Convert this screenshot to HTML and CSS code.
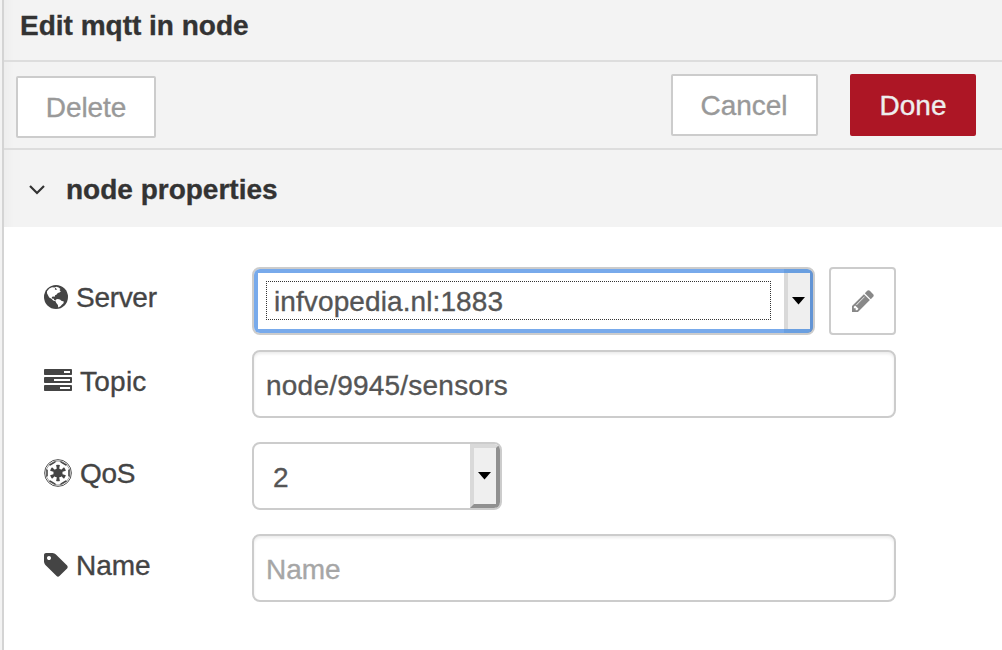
FILE: index.html
```html
<!DOCTYPE html>
<html lang="en">
<head>
<meta charset="utf-8">
<title>Edit mqtt in node</title>
<link rel="stylesheet" href="styles.css">
</head>
<body>
<main class="tray">
  <header class="tray-header"><span>Edit mqtt in node</span></header>
  <div class="toolbar">
    <button class="btn btn-delete">Delete</button>
    <button class="btn btn-cancel">Cancel</button>
    <button class="btn btn-done">Done</button>
  </div>
  <div class="section">
    <svg class="chevron" viewBox="0 0 18 12"><path d="M2 2l7 7 7-7" fill="none" stroke="#333" stroke-width="2.2"/></svg>
    <span class="section-title">node properties</span>
  </div>
  <form class="form">
    <div class="row row-server">
      <label class="label">
        <svg class="icon i24" viewBox="0 0 24 24"><circle cx="12" cy="12" r="12" fill="#444"/><path fill="#fff" d="M3 6.300L5.300 3.600 8 2.200l2.600.3 1.800-.8 2.300.7 1.800 1.600-1 .9 1.300 1.500-1.300 1.100-1.700.4-1.100 1.500-1.600.9-.4 1.500-1.600-.4-1.300.5.2 1.600 1.800.2.4 1.400 1.700.5-.3.7-2.500-.8-1.600-1.700-2.300-1.200-1.200-2.400-1-2z"/><path fill="#fff" d="M12 14.500l1.700-.6 2.300.6 1.300 1.300 2.500.7-.3 1.700-1.700 1.500-1.300 1.500-2.300 1.200-.3-2.300-1.600-2-.8-1.800z"/><path fill="#444" d="M11.300 2.800l1.700 1.400-1 .9-1.200-.9z"/></svg>
        <span class="t-server">Server</span>
      </label>
      <div class="select focused">
        <span class="value">infvopedia.nl:1883</span>
        <span class="drop"><svg class="arrow" viewBox="0 0 13 8"><path d="M0 0h13L6.500 7.500z"/></svg></span>
      </div>
      <button class="btn btn-edit" type="button"><svg class="pencil" viewBox="128 128 1536 1536"><path fill="#888" d="M491 1536l91-91-235-235-91 91v107h128v128h107zm523-928q0-22-22-22-10 0-17 7l-542 542q-7 7-7 17 0 22 22 22 10 0 17-7l542-542q7-7 7-17zm-54-192l416 416-832 832h-416v-416zm683 96q0 53-37 90l-166 166-416-416 166-165q36-38 90-38 53 0 91 38l235 234q37 39 37 91z"/></svg></button>
    </div>
    <div class="row row-topic">
      <label class="label">
        <svg class="icon i28" viewBox="0 0 1792 1792"><path fill="#444" d="M1024 1408h640v-128h-640v128zm-384-512h1024v-128h-1024v128zm640-512h384v-128h-384v128zm512 832v256q0 26-19 45t-45 19h-1664q-26 0-45-19t-19-45v-256q0-26 19-45t45-19h1664q26 0 45 19t19 45zm0-512v256q0 26-19 45t-45 19h-1664q-26 0-45-19t-19-45v-256q0-26 19-45t45-19h1664q26 0 45 19t19 45zm0-512v256q0 26-19 45t-45 19h-1664q-26 0-45-19t-19-45v-256q0-26 19-45t45-19h1664q26 0 45 19t19 45z"/></svg>
        <span class="t-topic">Topic</span>
      </label>
      <div class="input"><span class="t-path">node/9945/sensors</span></div>
    </div>
    <div class="row row-qos">
      <label class="label">
        <svg class="icon i28" viewBox="-14 -14 28 28">
          <circle r="13.400" fill="none" stroke="#444" stroke-width=".9"/>
          <circle r="12" fill="none" stroke="#444" stroke-width=".5"/>
          <g fill="#444">
            <circle r="4.600"/>
            <g id="spoke"><path d="M-.9-3l-1-5q1.900-.4 3.800 0L.9-3zM-.9 3l-1 5q1.900.4 3.800 0L.9 3z"/><path d="M11.700-3.900L10.200-3.100v6.200l1.500.8z"/><path d="M-11.700-3.900l1.500.8v6.200l-1.500.8z"/></g>
            <use href="#spoke" transform="rotate(60)"/>
            <use href="#spoke" transform="rotate(120)"/>
          </g>
        </svg>
        <span class="t-qos">QoS</span>
      </label>
      <div class="select small">
        <span class="value">2</span>
        <span class="drop"><svg class="arrow" viewBox="0 0 13 8"><path d="M0 0h13L6.500 7.500z"/></svg></span>
      </div>
    </div>
    <div class="row row-name">
      <label class="label">
        <svg class="icon i24" viewBox="128 128 1536 1536"><path fill="#444" d="M576 448q0-53-37.500-90.500t-90.500-37.500-90.500 37.500-37.500 90.500 37.500 90.500 90.500 37.500 90.500-37.500 37.500-90.500zm1067 576q0 53-37 90l-491 492q-39 37-91 37-53 0-90-37l-715-716q-38-37-64.500-101t-26.500-117v-416q0-52 38-90t90-38h416q53 0 117 26.500t102 64.500l715 714q37 39 37 91z"/></svg>
        <span class="t-name">Name</span>
      </label>
      <div class="input placeholder"><span>Name</span></div>
    </div>
  </form>
</main>
</body>
</html>
```
FILE: styles.css
```css
* { box-sizing: border-box; }
body {
  margin: 0;
  height: 650px;
  padding-left: 2px;
  overflow: hidden;
  background: #f3f3f3;
  color: #444;
  font: 28px/40px "Liberation Sans", Arial, sans-serif;
  -webkit-text-stroke: .35px;
}
span { white-space: nowrap; }
.tray { height: 650px; border-left: 2px solid #d4d4d4; background: #fff; }
.tray-header, .toolbar, .section {
  background: linear-gradient(90deg, #eee, #f3f3f3 10px);
}
.tray-header {
  height: 62px;
  padding: 6px 0 0 16px;
  border-bottom: 2px solid #ddd;
  color: #333;
  font-weight: bold;
}
.toolbar {
  display: flex;
  align-items: flex-start;
  height: 88px;
  padding: 12px 26px 0 12px;
  border-bottom: 2px solid #ddd;
}
.btn {
  display: flex;
  align-items: center;
  justify-content: center;
  height: 62px;
  padding: 2px 0 0;
  border: 2px solid #ccc;
  border-radius: 2px;
  background: #fff;
  color: #999;
  font: inherit;
  -webkit-text-stroke: inherit;
}
.btn-delete { width: 140px; margin-top: 2px; letter-spacing: -.1px; }
.btn-cancel { width: 147px; margin-left: auto; padding-right: 1px; }
.btn-done { width: 126px; margin-left: 32px; border-color: #ad1625; background: #ad1625; color: #eee; }
.section {
  display: flex;
  align-items: center;
  height: 77px;
  padding: 2px 0 0 24px;
  color: #333;
  font-weight: bold;
}
.chevron { width: 18px; height: 12px; margin-right: 20px; }
.form { display: flex; flex-direction: column; padding: 40px 0 0 40px; }
.row { display: flex; height: 68px; }
.row-topic { margin-top: 15px; }
.row-qos, .row-name { margin-top: 24px; }
.label { display: flex; align-items: center; width: 208px; height: 62px; }
.label span { padding-top: 2px; }
.row-server .label { height: 60px; }
.t-server { letter-spacing: -.3px; }
.t-topic { letter-spacing: .25px; }
.t-qos { letter-spacing: -.3px; }
.t-path { letter-spacing: .22px; }
.icon { flex: none; }
.i24 { width: 24px; height: 24px; margin-right: 8px; }
.i28 { width: 28px; height: 28px; margin-right: 8px; }
.input {
  display: flex;
  align-items: center;
  width: 644px;
  height: 68px;
  padding: 4px 12px 0;
  border: 2px solid #ccc;
  border-radius: 8px;
  box-shadow: inset 0 2px 3px rgba(0, 0, 0, .08);
  color: #555;
}
.placeholder { color: #a6a6a6; }
.select {
  display: flex;
  width: 250px;
  height: 68px;
  border: 2px solid #ccc;
  border-radius: 8px;
  overflow: hidden;
  color: #555;
}
.select .value { flex: 1; padding: 14px 0 0 19px; }
.drop {
  display: flex;
  align-items: center;
  justify-content: center;
  width: 30px;
  border: 4px solid #d9d9d9;
  border-right-color: #909090;
  border-bottom-color: #909090;
  background: #efefef;
}
.arrow { flex: none; width: 13px; height: 8px; margin-right: 1px; }
.select.focused { position: relative; width: 563px; }
.focused .value {
  flex: none;
  width: 505px;
  height: 39px;
  margin: 12px 0 0 12px;
  padding: 0 0 0 7px;
  border: 1px dotted #333;
  letter-spacing: .1px;
}
.focused .drop { margin-left: auto; margin-right: -1px; }
/* focus ring, darker where it crosses the drop button */
.focused::after {
  content: "";
  position: absolute;
  inset: 0 -1px 0 0;
  border: 4px solid;
  border-image: linear-gradient(90deg, #78aaeb 530px, #6a9fe0 530px, #6a9fe0 556px, #6294d5 556px) 4;
}
.btn-edit { width: 67px; height: 68px; margin-left: 14px; padding: 0; border-radius: 4px; }
.pencil { width: 22px; height: 22px; }
```
